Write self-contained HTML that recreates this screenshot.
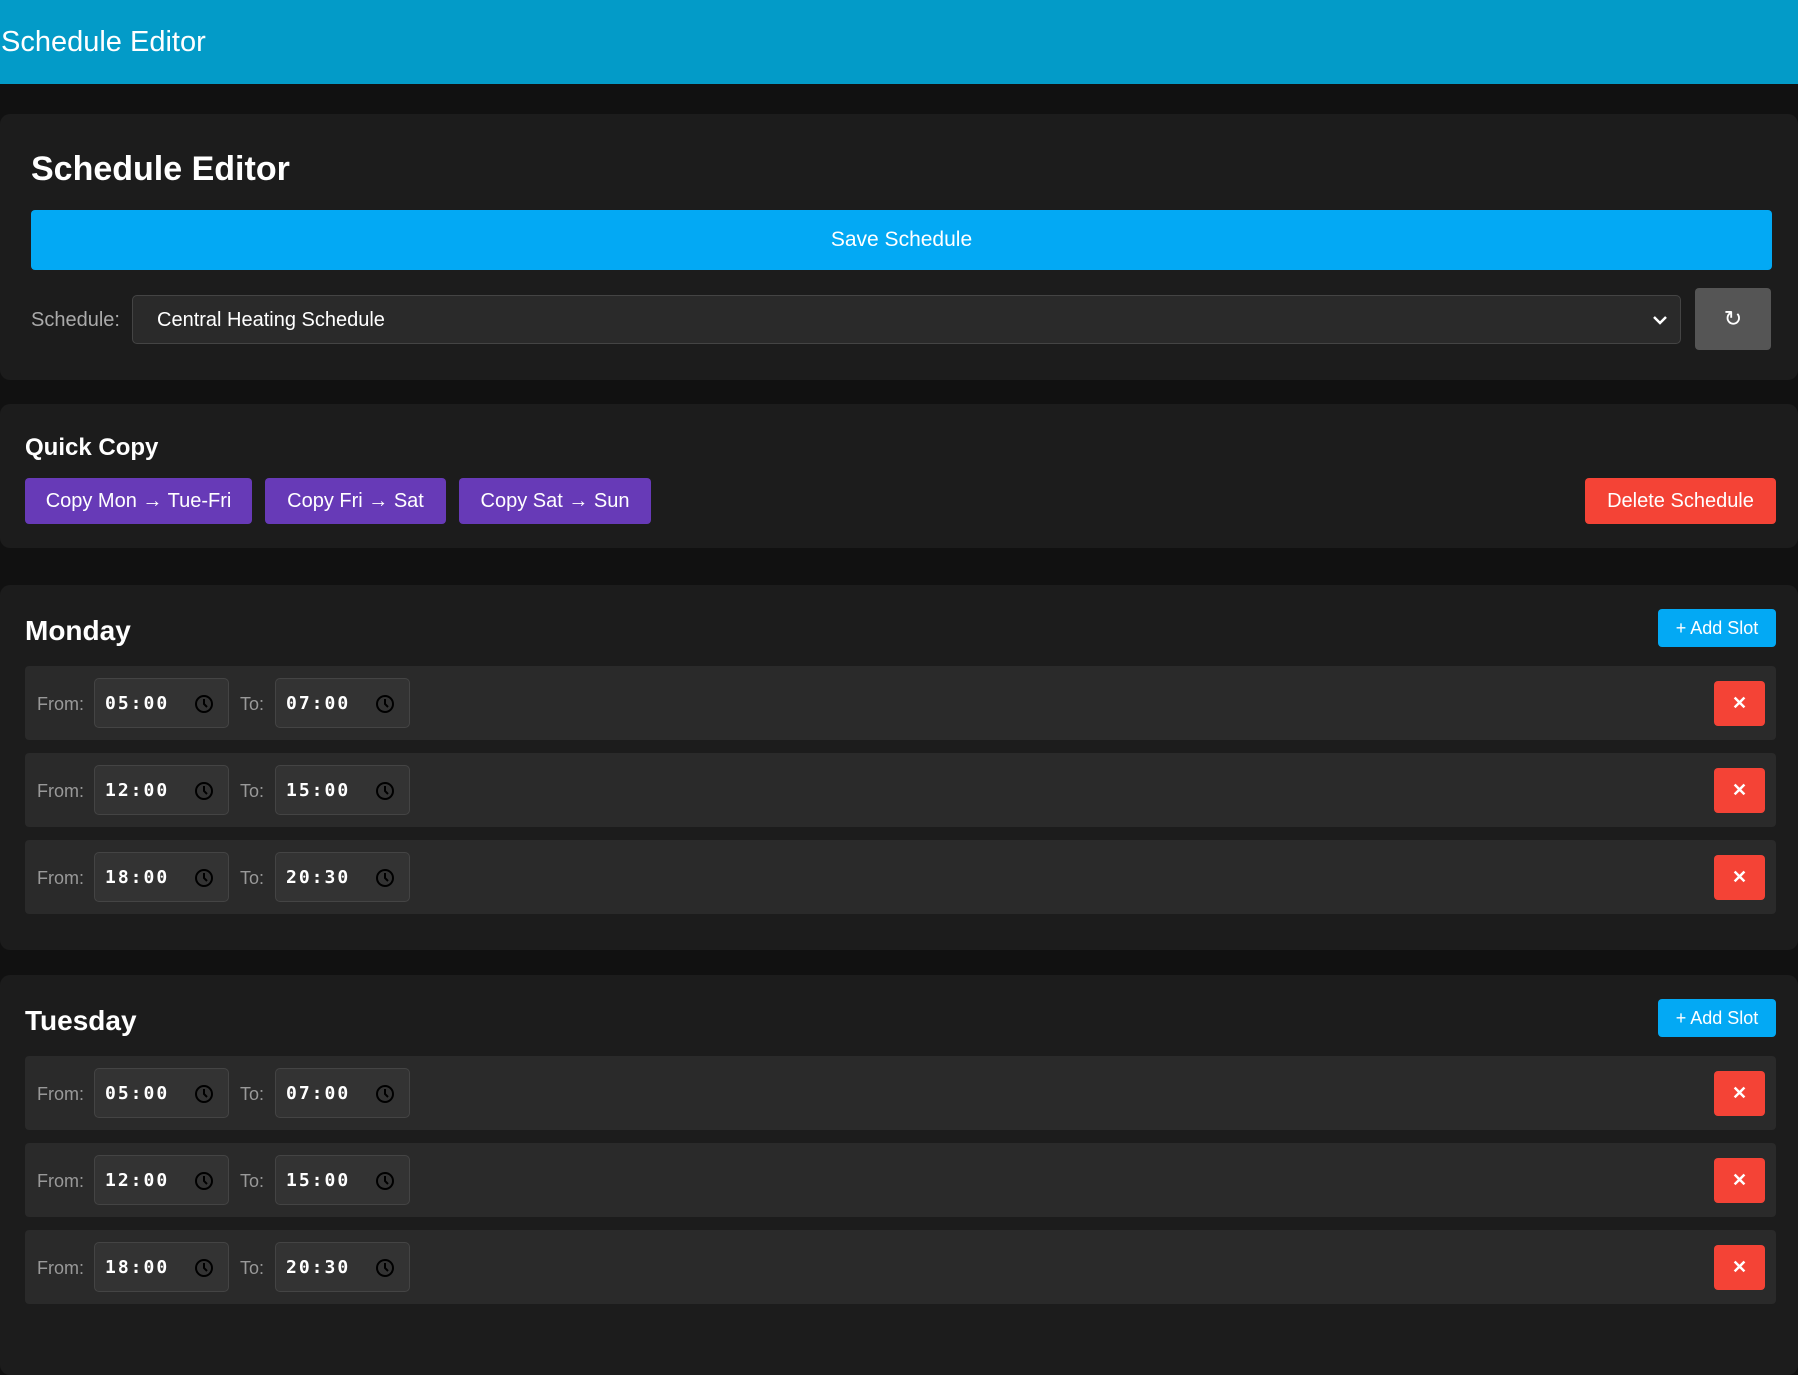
<!DOCTYPE html>
<html><head><style>
*{box-sizing:border-box;margin:0;padding:0}
body{width:1798px;height:1321px;background:#111;font-family:"Liberation Sans",sans-serif;color:#fff;overflow:hidden;position:relative}
.hdr{position:absolute;left:0;top:0;width:1798px;height:84px;background:#039bc8;font-size:29px;line-height:84px;padding-left:1px}
.card{position:absolute;left:0;width:1798px;background:#1c1c1c;border-radius:10px}
.abs{position:absolute}
.btn{position:absolute;border-radius:4px;display:flex;align-items:center;justify-content:center;font-size:20px;color:#fff}
.slot{position:absolute;left:25px;width:1751px;height:74px;background:#2a2a2a;border-radius:4px}
.lbl{position:absolute;top:1px;line-height:74px;font-size:18px;color:#999}
.inp{position:absolute;top:12px;width:135px;height:50px;background:#333;border:1px solid #444;border-radius:5px;font-family:"DejaVu Sans Mono",monospace;font-weight:bold;font-size:18px;line-height:50px;padding-left:10px;letter-spacing:2px}
.inp svg{position:absolute;right:14px;top:15px}
.del{position:absolute;right:11px;top:15px;width:51px;height:45px;background:#f44336;border-radius:4px;display:flex;align-items:center;justify-content:center;font-size:18px;font-weight:bold}
</style></head><body>
<div class="hdr">Schedule Editor</div>

<div class="card" style="top:114px;height:266px">
<div class="abs" style="left:31px;top:36px;font-size:34px;font-weight:bold">Schedule Editor</div>
<div class="btn" style="left:31px;top:96px;width:1741px;height:60px;background:#03a9f4;font-size:21px">Save Schedule</div>
<div class="abs" style="left:31px;top:195px;font-size:20px;color:#aaa">Schedule:</div>
<div class="abs" style="left:132px;top:181px;width:1549px;height:49px;background:#2a2a2a;border:1px solid #444;border-radius:5px;font-size:20px;line-height:49px;padding-left:24px">Central Heating Schedule
<svg class="abs" style="right:12px;top:18px" width="16" height="12" viewBox="0 0 16 12"><path d="M2 3l6 6 6-6" stroke="#fff" stroke-width="2.5" fill="none"/></svg></div>
<div class="btn" style="left:1695px;top:174px;width:76px;height:62px;background:#555;font-size:22px">↻</div>
</div>

<div class="card" style="top:404px;height:144px">
<div class="abs" style="left:25px;top:30px;font-size:24px;font-weight:bold">Quick Copy</div>
<div class="btn" style="left:25px;top:74px;width:227px;height:46px;background:#673ab7">Copy Mon → Tue-Fri</div>
<div class="btn" style="left:265px;top:74px;width:181px;height:46px;background:#673ab7">Copy Fri → Sat</div>
<div class="btn" style="left:459px;top:74px;width:192px;height:46px;background:#673ab7">Copy Sat → Sun</div>
<div class="btn" style="left:1585px;top:74px;width:191px;height:46px;background:#f44336">Delete Schedule</div>
</div>

<div class="card" style="top:585px;height:365px">
<div class="abs" style="left:25px;top:30px;font-size:28px;font-weight:bold">Monday</div>
<div class="btn" style="left:1658px;top:24px;width:118px;height:38px;background:#03a9f4;font-size:18px">+ Add Slot</div>
</div>
<div class="card" style="top:975px;height:400px">
<div class="abs" style="left:25px;top:30px;font-size:28px;font-weight:bold">Tuesday</div>
<div class="btn" style="left:1658px;top:24px;width:118px;height:38px;background:#03a9f4;font-size:18px">+ Add Slot</div>
</div>

<div id="slots"></div>
<script>
const clk='<svg width="20" height="20" viewBox="0 0 20 20"><circle cx="10" cy="10" r="8" stroke="#000" stroke-width="2" fill="none"/><path d="M10 5v5l3 3" stroke="#000" stroke-width="2" fill="none"/></svg>';
const tops=[666,753,840,1056,1143,1230];
const t=[["05:00","07:00"],["12:00","15:00"],["18:00","20:30"]];
let h='';
tops.forEach((y,i)=>{const v=t[i%3];
h+=`<div class="slot" style="top:${y}px"><div class="lbl" style="left:12px">From:</div><div class="inp" style="left:69px">${v[0]}${clk}</div><div class="lbl" style="left:215px">To:</div><div class="inp" style="left:250px">${v[1]}${clk}</div><div class="del">✕</div></div>`;});
document.getElementById('slots').innerHTML=h;
</script>
</body></html>
